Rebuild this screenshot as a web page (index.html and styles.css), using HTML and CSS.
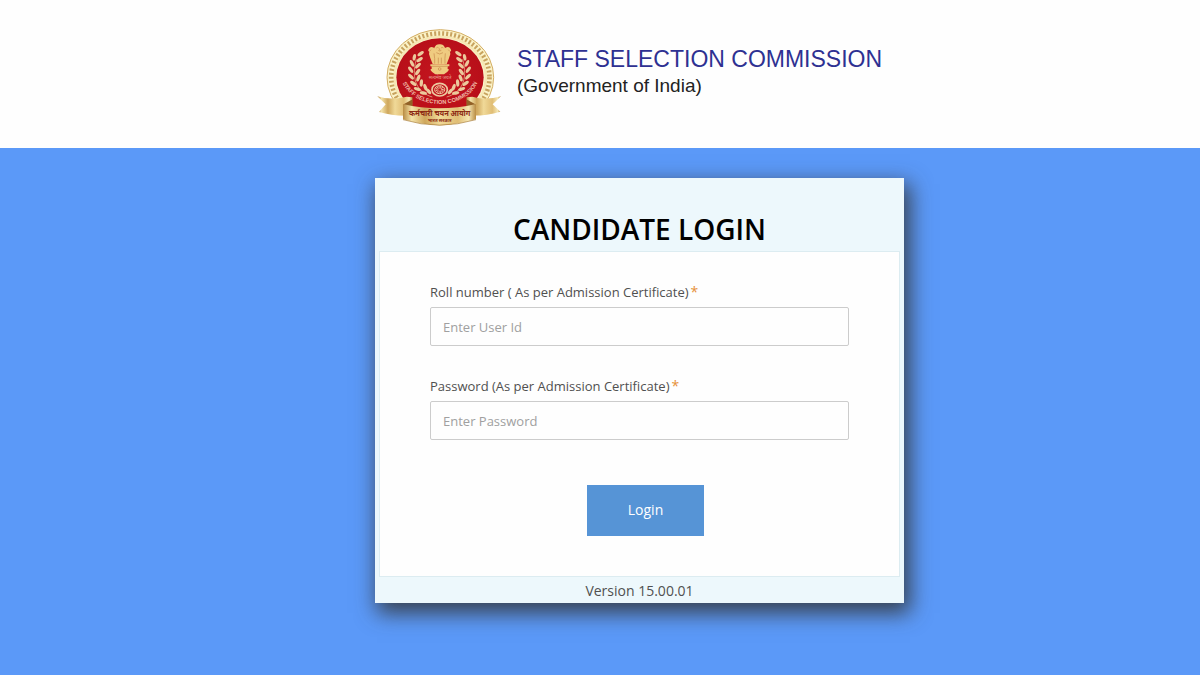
FILE: index.html
```html
<!DOCTYPE html>
<html lang="en">
<head>
<meta charset="utf-8">
<meta name="viewport" content="width=device-width, initial-scale=1">
<title>Candidate Login</title>
<link rel="stylesheet" href="styles.css">
</head>
<body>
<header class="site-header">
  <svg class="logo" viewBox="18 21 378 312" role="img" aria-label="Staff Selection Commission emblem">
    <defs>
      <linearGradient id="gold" x1="0" x2="1" y1="0" y2="0">
        <stop offset="0" stop-color="#b98c43"/><stop offset=".12" stop-color="#f3e2a8"/>
        <stop offset=".3" stop-color="#cfa75c"/><stop offset=".5" stop-color="#f0d998"/>
        <stop offset=".75" stop-color="#e0bd74"/><stop offset=".9" stop-color="#f5e6b2"/>
        <stop offset="1" stop-color="#b98c43"/>
      </linearGradient>
      <radialGradient id="red"><stop offset="0" stop-color="#c4161f"/><stop offset="1" stop-color="#b80f19"/></radialGradient>
      <path id="motto" d="M91 158 A118 93 0 0 0 329 158"/>
      <g id="laurel" fill="#ecc99c">
        <path d="M187 231 C145 219 121 181 139 118" fill="none" stroke="#ecc99c" stroke-width="2"/>
        <ellipse cx="152" cy="101" rx="11" ry="5" transform="rotate(-35 152 101)"/>
        <ellipse cx="133" cy="112" rx="10" ry="5" transform="rotate(-80 133 112)"/>
        <ellipse cx="149" cy="119" rx="11" ry="5" transform="rotate(-35 149 119)"/>
        <ellipse cx="126" cy="130" rx="11" ry="5" transform="rotate(65 126 130)"/>
        <ellipse cx="144" cy="137" rx="11" ry="5" transform="rotate(-45 144 137)"/>
        <ellipse cx="122" cy="149" rx="11" ry="5" transform="rotate(55 122 149)"/>
        <ellipse cx="143" cy="156" rx="11" ry="5" transform="rotate(-55 143 156)"/>
        <ellipse cx="123" cy="170" rx="11" ry="5" transform="rotate(45 123 170)"/>
        <ellipse cx="145" cy="174" rx="11" ry="5" transform="rotate(-70 145 174)"/>
        <ellipse cx="130" cy="190" rx="11" ry="5" transform="rotate(35 130 190)"/>
        <ellipse cx="154" cy="189" rx="11" ry="5" transform="rotate(-85 154 189)"/>
        <ellipse cx="142" cy="207" rx="11" ry="5" transform="rotate(20 142 207)"/>
        <ellipse cx="166" cy="202" rx="11" ry="5" transform="rotate(70 166 202)"/>
        <ellipse cx="160" cy="219" rx="11" ry="5" transform="rotate(10 160 219)"/>
        <ellipse cx="176" cy="214" rx="10" ry="5" transform="rotate(50 176 214)"/>
      </g>
    </defs>
    <ellipse cx="211" cy="172" rx="160" ry="143" fill="#fbf3c9" stroke="#d3ad62" stroke-width="3"/>
    <ellipse cx="211" cy="172" rx="147" ry="131" fill="none" stroke="#c8a35f" stroke-width="15" stroke-dasharray="6 6"/>
    <ellipse cx="211" cy="172" rx="137" ry="122" fill="none" stroke="#f6e8b5" stroke-width="7"/>
    <ellipse cx="210" cy="172" rx="131" ry="117" fill="url(#red)"/>
    <use href="#laurel"/>
    <use href="#laurel" transform="matrix(-1 0 0 1 417 0)"/>
    <g fill="#efcb80">
      <path d="M193 83 Q198 72 209 73 Q220 72 225 83 L225 97 L231 111 L225 133 L193 133 L187 111 L193 97Z"/>
      <path d="M193 84 Q181 77 176 87 Q172 92 178 96 L177 102 Q182 119 188 132 L199 132 L202 91Z"/>
      <path d="M225 84 Q237 77 242 87 Q246 92 240 96 L241 102 Q236 119 230 132 L219 132 L216 91Z"/>
      <path d="M181 133 H238 V139 H233 V147 H236 V151 Q232 158 222 163 H196 Q186 158 182 151 V147 H185 V139 H181Z"/>
    </g>
    <g fill="none" stroke="#c98a4c" stroke-width="2">
      <path d="M199 84 Q203 80 206 84 M213 84 Q216 80 220 84 M205 91 Q209 95 214 91 M209 85 V91 M199 98 Q209 106 219 98 M192 100 Q195 116 194 131 M226 100 Q224 116 225 131 M205 113 V131 M214 113 V131 M183 89 L179 94 M235 89 L239 94 M185 139 H233"/>
      <circle cx="209" cy="147" r="4"/>
    </g>
    <text class="emblem-small" x="210" y="178">सत्यमेव जयते</text>
    <g fill="none" stroke="#edcaa0">
      <ellipse cx="209" cy="209" rx="23" ry="19" stroke-width="5"/>
      <ellipse cx="209" cy="209" rx="15" ry="12" stroke-width="3"/>
      <ellipse cx="209" cy="209" rx="8" ry="7" stroke-width="8" stroke-dasharray="2 2"/>
    </g>
    <path d="M22 229 Q62 242 110 230 L128 232 L128 286 Q75 290 27 276 L47 253Z" fill="url(#gold)"/>
    <path d="M393 229 Q349 242 307 230 L289 232 L289 286 Q340 290 391 275 L368 253Z" fill="url(#gold)"/>
    <path d="M128 238 L101 253 L101 264 L128 264Z M289 238 L316 253 L316 264 L289 264Z" fill="#926126"/>
    <path d="M128 230 V264 Q209 280 289 264 V230 Q209 250 128 230Z" fill="#bd1019"/>
    <text class="emblem-arc"><textPath href="#motto" startOffset="50%">STAFF SELECTION COMMISSION</textPath></text>
    <path d="M99 252 Q207 278 318 252 V298 Q207 332 99 298Z" fill="url(#gold)"/>
    <path d="M99 299 Q207 332 318 299" fill="none" stroke="#a87b38" stroke-width="2"/>
    <text class="emblem-ribbon" x="209" y="288">कर्मचारी चयन आयोग</text>
    <text class="emblem-ribbon emblem-ribbon-small" x="209" y="305">भारत सरकार</text>
  </svg>
  <div class="brand">
    <h1 class="brand-name">STAFF SELECTION COMMISSION</h1>
    <p class="brand-sub">(Government of India)</p>
  </div>
</header>
<main class="main">
  <section class="card">
    <h2 class="card-title">CANDIDATE LOGIN</h2>
    <form class="form">
      <div class="field">
        <label class="label" for="user">Roll number ( As per Admission Certificate)<span class="required">*</span></label>
        <input class="input" id="user" type="text" placeholder="Enter User Id">
      </div>
      <div class="field">
        <label class="label" for="password">Password (As per Admission Certificate)<span class="required">*</span></label>
        <input class="input" id="password" type="password" placeholder="Enter Password">
      </div>
      <button class="login" type="submit">Login</button>
    </form>
    <p class="version">Version 15.00.01</p>
  </section>
</main>
</body>
</html>
```

FILE: styles.css
```css
* {
  box-sizing: border-box;
}

body {
  display: flex;
  flex-direction: column;
  min-height: 100vh;
  margin: 0;
  background: #5b99f8;
  color: #505050;
  font-family: "Open Sans", sans-serif;
  font-size: 14px;
}

h1,
h2,
p {
  margin: 0;
  font-weight: 400;
}

.site-header {
  display: flex;
  gap: 15px;
  padding: 27px 16px 17px 376px;
  background: #fefefe;
}

.logo {
  flex: none;
  width: 126px;
  height: 104px;
}

.emblem-small,
.emblem-arc,
.emblem-ribbon {
  font-family: "Noto Sans", sans-serif;
  text-anchor: middle;
}

.emblem-small {
  fill: #e6a392;
  font-size: 14px;
}

.emblem-arc {
  fill: #f0b9a8;
  font-family: "Liberation Sans", sans-serif;
  font-size: 17px;
  font-weight: 700;
}

.emblem-ribbon {
  fill: #8c2a14;
  font-size: 22px;
  font-weight: 700;
}

.emblem-ribbon-small {
  font-size: 14px;
}

.brand {
  padding-top: 18px;
  font-family: "Liberation Sans", sans-serif;
}

.brand-name {
  color: #2e3192;
  font-size: 23px;
  line-height: 28px;
}

.brand-sub {
  color: #222;
  font-size: 19px;
  line-height: 26px;
}

.main {
  flex: 1;
  padding: 30px 16px 30px 375px;
}

.card {
  max-width: 529px;
  padding: 31px 4px 0;
  background: #edf8fc;
  box-shadow: 4px 8px 20px 2px rgba(50, 50, 50, 0.85);
}

.card-title {
  padding-bottom: 1px;
  color: #000;
  font-size: 28px;
  font-weight: 600;
  line-height: 41px;
  text-align: center;
}

.form {
  display: flex;
  flex-direction: column;
  gap: 30px;
  padding: 30px 50px 40px;
  border: 1px solid #dcecf1;
  background: #fefefe;
}

.field {
  display: flex;
  flex-direction: column;
  gap: 5px;
}

.label {
  font-size: 13px;
  line-height: 20px;
}

.required {
  margin-left: 2px;
  color: #e69138;
  font-size: 14px;
  line-height: 1;
}

.input {
  width: 100%;
  height: 39px;
  padding: 0 12px;
  border: 1px solid #ccc;
  border-radius: 2px;
  background: #fefefe;
  color: #505050;
  font: inherit;
  font-size: 13px;
}

.input::placeholder {
  color: #a0a0a0;
}

.login {
  align-self: center;
  width: 117px;
  height: 51px;
  margin: 15px 0 0 12px;
  padding-bottom: 3px;
  border: 0;
  background: #5694d6;
  color: #fff;
  font: inherit;
}

.version {
  padding-top: 2px;
  line-height: 24px;
  text-align: center;
}
```
